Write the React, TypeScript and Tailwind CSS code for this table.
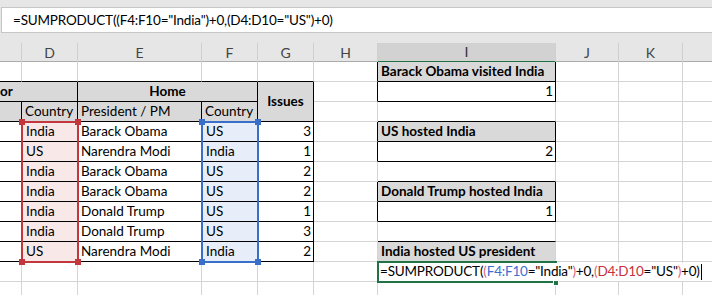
import React from 'react';

// gridline / border colour combos for a cell (right + bottom edge)
const g = 'border-r-[#d4d4d4] border-b-[#d4d4d4]';
const k = 'border-r-black border-b-black';
const gk = 'border-r-[#d4d4d4] border-b-black';
const kg = 'border-r-black border-b-[#d4d4d4]';

const HEAD = 'bg-[#d9d9d9]';

interface CellProps {
  children?: React.ReactNode;
  className?: string;
  align?: 'left' | 'right' | 'center' | 'middle';
}

const alignments = {
  left: 'items-end justify-start pl-[3px] pb-[1px]',
  right: 'items-end justify-end pr-[2px] pb-[1px]',
  center: 'items-end justify-center pb-[1px]',
  middle: 'items-center justify-center',
};

const Cell: React.FC<CellProps> = ({ children, className = '', align = 'left' }) => (
  <div
    className={`flex whitespace-nowrap overflow-hidden border-r border-b leading-[17px] ${alignments[align]} ${className}`}
  >
    {children}
  </div>
);

const columns = [
  { id: 'C', label: '' },
  { id: 'D', label: 'D' },
  { id: 'E', label: 'E' },
  { id: 'F', label: 'F' },
  { id: 'G', label: 'G' },
  { id: 'H', label: 'H' },
  { id: 'I', label: 'I' },
  { id: 'J', label: 'J' },
  { id: 'K', label: 'K' },
  { id: 'L', label: '' },
];

const visits = [
  { from: 'India', president: 'Barack Obama', home: 'US', issues: 3 },
  { from: 'US', president: 'Narendra Modi', home: 'India', issues: 1 },
  { from: 'India', president: 'Barack Obama', home: 'US', issues: 2 },
  { from: 'India', president: 'Barack Obama', home: 'US', issues: 2 },
  { from: 'India', president: 'Donald Trump', home: 'US', issues: 1 },
  { from: 'India', president: 'Donald Trump', home: 'US', issues: 3 },
  { from: 'US', president: 'Narendra Modi', home: 'India', issues: 2 },
];

// what sits in columns H / I beside each data row
const sideCells: { h: string; i: string; text?: string; head?: boolean }[] = [
  { h: kg, i: k, text: 'US hosted India', head: true },
  { h: kg, i: k, text: '2' },
  { h: g, i: gk },
  { h: kg, i: k, text: 'Donald Trump hosted India', head: true },
  { h: kg, i: k, text: '1' },
  { h: g, i: gk },
  { h: g, i: g, text: 'India hosted US president', head: true },
];

const Tail = () => (
  <>
    <Cell className={g} />
    <Cell className={g} />
    <Cell className={g} />
  </>
);

const FormulaText = () => (
  <>
    =SUMPRODUCT(<span className="text-[#e0607e]">(</span>
    <span className="text-[#3a6fd0]">F4:F10</span>="India"
    <span className="text-[#e0607e]">)</span>+0,
    <span className="text-[#e0607e]">(</span>
    <span className="text-[#c8303a]">D4:D10</span>="US"
    <span className="text-[#e0607e]">)</span>+0)
  </>
);

export default function App() {
  return (
    <div className="relative w-[712px] h-[295px] overflow-hidden bg-white text-black text-[13.5px] [font-family:Lato,'Liberation_Sans',sans-serif]">
      {/* formula bar */}
      <div className="bg-[#e6e6e6] pt-[7px] pb-[10px] pl-[1px]">
        <div className="h-[26px] w-[760px] border border-[#c6c6c6] bg-white pl-[11px] leading-[24px] tracking-[-0.2px]">
          =SUMPRODUCT((F4:F10="India")+0,(D4:D10="US")+0)
        </div>
      </div>

      {/* column headers */}
      <div className="grid w-[747px] grid-cols-[22px_56px_124px_56px_56px_64px_178px_63px_64px_64px] h-[19px] bg-[#e6e6e6] border-b border-b-[#ababab] text-[#444] text-[14px]">
        {columns.map((c) => (
          <div
            key={c.id}
            className={`flex items-center justify-center border-r border-r-[#cfcfcf] leading-[18px] ${
              c.id === 'I' ? 'bg-[#d2d2d2] border-b-2 border-b-[#217346] text-[#333]' : ''
            }`}
          >
            {c.label}
          </div>
        ))}
      </div>

      {/* sheet */}
      <div className="relative">
        <div className="grid w-[747px] grid-cols-[22px_56px_124px_56px_56px_64px_178px_63px_64px_64px] auto-rows-[20px]">
          {/* row: blank line above table */}
          <Cell className={gk} />
          <Cell className={gk} />
          <Cell className={gk} />
          <Cell className={gk} />
          <Cell className={gk} />
          <Cell className={kg} />
          <Cell className={`${k} ${HEAD} font-bold`}>Barack Obama visited India</Cell>
          <Tail />

          {/* row: group headers */}
          <Cell className={`${k} ${HEAD} col-span-2 font-bold !pl-0`}>or</Cell>
          <Cell align="center" className={`${k} ${HEAD} col-span-2 font-bold`}>Home</Cell>
          <Cell align="middle" className={`${k} ${HEAD} row-span-2 font-bold`}>Issues</Cell>
          <Cell className={kg} />
          <Cell align="right" className={k}>1</Cell>
          <Tail />

          {/* row: sub headers */}
          <Cell className={`${k} ${HEAD}`} />
          <Cell className={`${k} ${HEAD}`}>Country</Cell>
          <Cell className={`${k} ${HEAD}`}>President / PM</Cell>
          <Cell className={`${k} ${HEAD}`}>Country</Cell>
          <Cell className={g} />
          <Cell className={gk} />
          <Tail />

          {visits.map((v, idx) => {
            const side = sideCells[idx];
            return (
              <React.Fragment key={idx}>
                <Cell className={k} />
                <Cell className={`${k} bg-[#f9e8e8] !pl-[4px]`}>{v.from}</Cell>
                <Cell className={k}>{v.president}</Cell>
                <Cell className={`${k} bg-[#e8eef9] !pl-[4px]`}>{v.home}</Cell>
                <Cell align="right" className={k}>{v.issues}</Cell>
                <Cell className={side.h} />
                <Cell
                  align={side.text && !side.head ? 'right' : 'left'}
                  className={`${side.i} ${side.head ? `${HEAD} font-bold` : ''}`}
                >
                  {side.text}
                </Cell>
                <Tail />
              </React.Fragment>
            );
          })}

          {/* row: editing row + one more */}
          {Array.from({ length: 20 }).map((_, i) => (
            <Cell key={i} className={g} />
          ))}
        </div>

        {/* reference range highlights */}
        <div className="absolute left-[21px] top-[59px] w-[58px] h-[142px] border-2 border-[#c3373c]" />
        <div className="absolute left-[19px] top-[57px] w-[6px] h-[6px] bg-[#c3373c]" />
        <div className="absolute left-[75px] top-[57px] w-[6px] h-[6px] bg-[#c3373c]" />
        <div className="absolute left-[19px] top-[197px] w-[6px] h-[6px] bg-[#c3373c]" />
        <div className="absolute left-[75px] top-[197px] w-[6px] h-[6px] bg-[#c3373c]" />

        <div className="absolute left-[201px] top-[59px] w-[58px] h-[142px] border-2 border-[#3a6fc9]" />
        <div className="absolute left-[199px] top-[57px] w-[6px] h-[6px] bg-[#3a6fc9]" />
        <div className="absolute left-[255px] top-[57px] w-[6px] h-[6px] bg-[#3a6fc9]" />
        <div className="absolute left-[199px] top-[197px] w-[6px] h-[6px] bg-[#3a6fc9]" />
        <div className="absolute left-[255px] top-[197px] w-[6px] h-[6px] bg-[#3a6fc9]" />

        {/* active cell in edit mode */}
        <div className="absolute left-[377px] top-[199px] w-[180px] h-[22px] border-2 border-[#217346]" />
        <div className="absolute left-[379px] top-[201px] h-[18px] flex items-end bg-white pl-[1px] pr-[2px] pb-[1px] leading-[17px] whitespace-nowrap tracking-[-0.2px]">
          <FormulaText />
          <span className="ml-[1px] inline-block w-[1px] h-[16px] bg-black" />
        </div>
        <div className="absolute left-[553px] top-[218px] w-[6px] h-[6px] bg-[#217346] border border-white" />
      </div>
    </div>
  );
}
